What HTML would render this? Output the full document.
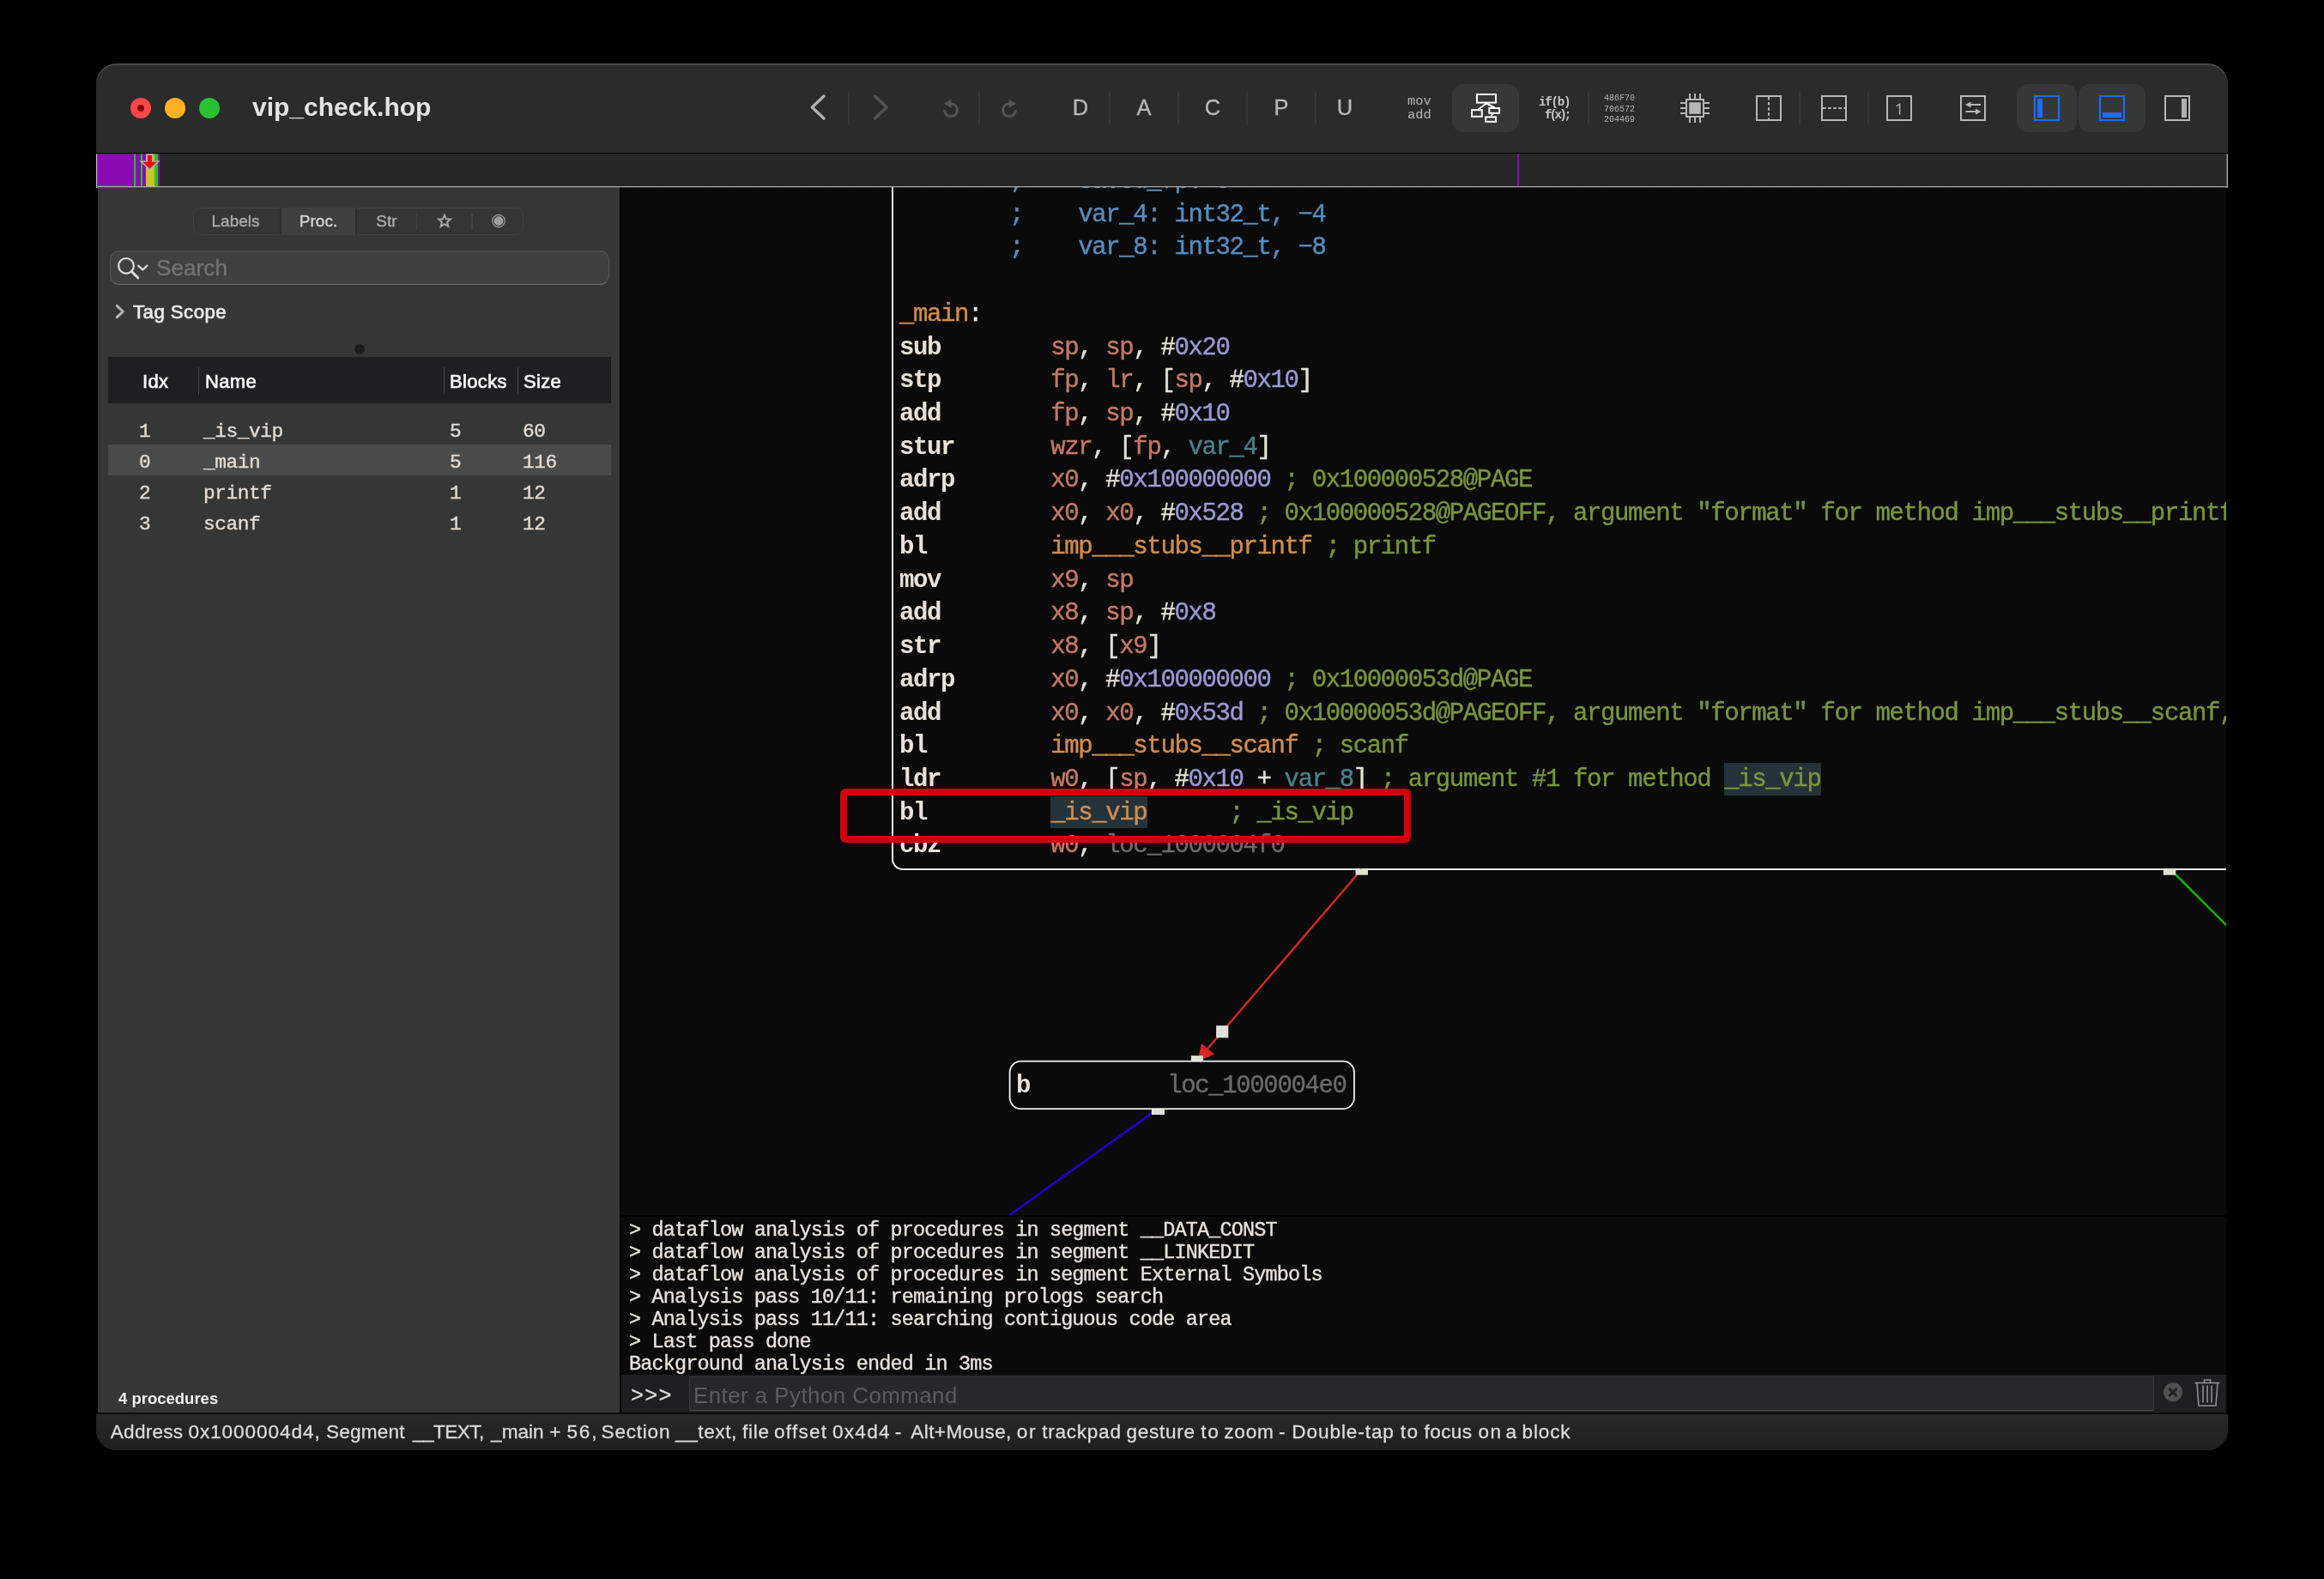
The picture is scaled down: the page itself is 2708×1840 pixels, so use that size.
<!DOCTYPE html>
<html>
<head>
<meta charset="utf-8">
<title>vip_check.hop</title>
<style>
*{box-sizing:border-box;margin:0;padding:0}
html,body{width:2708px;height:1840px;background:#000;overflow:hidden}
body{position:relative;font-family:"Liberation Sans",sans-serif;color:#ddd}
.abs{position:absolute}
.code,.con,.t{will-change:transform}
#win{position:absolute;left:112px;top:74px;width:2484px;height:1615.5px;border-radius:24px;overflow:hidden;background:#2a2c2b}
/* coordinates inside #win are page coords minus (112,74) -> use wrapper shifted */
#in{position:absolute;left:-112px;top:-74px;width:2708px;height:1840px}
#titlebar{left:112px;top:74px;width:2484px;height:104px;background:#2a2c2b}
#hilite{left:112px;top:74px;width:2484px;height:60px;border-radius:24px 24px 0 0;box-shadow:inset 0 1.5px 0 0 rgba(255,255,255,0.2);z-index:9}
#tline{left:112px;top:178px;width:2484px;height:2px;background:linear-gradient(#000 0,#000 50%,#151515 50%,#151515 100%)}
#nav{left:112px;top:179px;width:2484px;height:38px;background:#272626}
#navline{left:112px;top:217px;width:2484px;height:2px;background:linear-gradient(#a9a9a9 0,#a9a9a9 50%,rgba(170,170,170,.28) 50%,rgba(170,170,170,.28) 100%);z-index:5}
#sidebar{left:114px;top:218px;width:608px;height:1429px;background:#353736}
#divider{left:722px;top:218px;width:2px;height:1429px;background:#000}
#graph{left:724px;top:218px;width:1870px;height:1198px;background:#0a0a0a;overflow:hidden}
#console{left:724px;top:1416px;width:1870px;height:186px;background:#0a0a0a;border-top:2px solid #000}
#inputrow{left:724px;top:1602px;width:1870px;height:44px;background:#1e1f20}
#status{left:112px;top:1646px;width:2484px;height:44px;background:linear-gradient(#282828,#1f1f1f);border-top:2px solid #0c0c0c}
.sg{top:246px;text-align:center;font-size:19px;line-height:24px;color:#acaeae;-webkit-text-stroke:0.35px}
.th{top:430.5px;font-size:22px;line-height:28px;color:#f6f6f6;letter-spacing:0.35px;-webkit-text-stroke:0.7px}
.tc{top:486.3px;font-family:"Liberation Mono",monospace;font-size:22.8px;letter-spacing:-0.442px;line-height:35.9px;white-space:pre;color:#e4dcd3;-webkit-text-stroke:0.35px}
#stext{left:0;top:1653.9px;height:30px;width:2000px;font-size:22.6px;line-height:30px;color:#dcdcdc;white-space:pre;-webkit-text-stroke:0.3px}
#stext span{position:absolute;top:0}
.mono{font-family:"Liberation Mono",monospace}
.tb{top:110px;width:40px;text-align:center;font-size:25.5px;line-height:30px;color:#b6b8b8;-webkit-text-stroke:0.3px}
.code{font-family:"Liberation Mono",monospace;font-size:29px;letter-spacing:-1.383px;line-height:38.72px;white-space:pre;color:#e6e2da;-webkit-text-stroke:0.4px}
.m{-webkit-text-stroke:0}
.cl{position:absolute;left:0;height:38.72px}
.m{font-weight:bold;color:#e9e2da}
.r{color:#c57867}
.n{color:#9a9ad8}
.c{color:#78963e}
.v{color:#4b818a}
.o{color:#d18c4e}
.b{color:#578dbf}
.g{color:#6b6b6b}
.hl{background:#243239;padding:2.9px 0.8px 1.6px 0.6px;margin:0 -0.8px 0 -0.6px}
.con{font-family:"Liberation Mono",monospace;font-size:23.5px;letter-spacing:-0.862px;-webkit-text-stroke:0.35px;line-height:25.93px;white-space:pre;color:#e8e3dc}
</style>
</head>
<body>
<div id="win"><div id="in">
<div class="abs" id="titlebar"></div>
<div class="abs" id="hilite"></div>
<svg class="abs" style="left:112px;top:74px" width="2484" height="106" viewBox="112 74 2484 106">
<circle cx="164" cy="126" r="12" fill="#fe4848"/><circle cx="164" cy="126" r="4" fill="#820005"/>
<circle cx="204" cy="126" r="12" fill="#fdb024"/>
<circle cx="244" cy="126" r="12" fill="#27c133"/>
<polyline points="960,112 946.3,125 960,138" fill="none" stroke="#b2b4b4" stroke-width="3.3" stroke-linecap="round" stroke-linejoin="round"/>
<line x1="989" y1="106.5" x2="989" y2="145.5" stroke="#3a3c3b" stroke-width="1.6"/>
<polyline points="1019.5,112 1033.2,125 1019.5,138" fill="none" stroke="#525556" stroke-width="3.3" stroke-linecap="round" stroke-linejoin="round"/>
<g fill="none" stroke="#525556" stroke-width="2.9">
<path d="M1100.6,128.2 A7.4,7.4 0 1 0 1108,120.8"/>
<path d="M1183.4,128.2 A7.4,7.4 0 1 1 1176,120.8"/>
</g>
<polygon points="1100.2,120.8 1108.4,115.6 1108.4,126" fill="#525556"/>
<polygon points="1183.8,120.8 1175.6,115.6 1175.6,126" fill="#525556"/>
<line x1="1141" y1="106.5" x2="1141" y2="145.5" stroke="#3a3c3b" stroke-width="1.6"/><line x1="1293" y1="106.5" x2="1293" y2="145.5" stroke="#3a3c3b" stroke-width="1.6"/><line x1="1373" y1="106.5" x2="1373" y2="145.5" stroke="#3a3c3b" stroke-width="1.6"/><line x1="1453" y1="106.5" x2="1453" y2="145.5" stroke="#3a3c3b" stroke-width="1.6"/><line x1="1533" y1="106.5" x2="1533" y2="145.5" stroke="#3a3c3b" stroke-width="1.6"/><line x1="1851" y1="106.5" x2="1851" y2="145.5" stroke="#3a3c3b" stroke-width="1.6"/><line x1="2097" y1="106.5" x2="2097" y2="145.5" stroke="#3a3c3b" stroke-width="1.6"/><line x1="2177" y1="106.5" x2="2177" y2="145.5" stroke="#3a3c3b" stroke-width="1.6"/>
<rect x="1692" y="98" width="78" height="56" rx="13" fill="#363837"/>
<g fill="none" stroke="#ffffff" stroke-width="2">
<rect x="1721" y="110" width="22" height="9.6"/>
<rect x="1715" y="128.2" width="11.8" height="7.6"/>
<rect x="1735.3" y="126" width="11.8" height="5.8"/>
<rect x="1731.2" y="136.4" width="11.8" height="5.4"/>
<path d="M1732,120.5 L1722.5,127.5 M1732,120.5 L1741.5,125.5 M1739.5,132.5 L1737,136"/>
</g>
<g fill="none" stroke="#b5b8b8" stroke-width="2">
<rect x="1965" y="116" width="20" height="20"/>
<path d="M1969,109v6.5M1975,109v6.5M1981,109v6.5M1969,136.5v6.5M1975,136.5v6.5M1981,136.5v6.5M1958,120h6.5M1958,126h6.5M1958,132h6.5M1985.5,120h6.5M1985.5,126h6.5M1985.5,132h6.5"/>
<rect x="2047" y="112" width="28" height="28"/>
<path d="M2061,113v26" stroke-dasharray="3.5,2.6" stroke-dashoffset="0"/>
<rect x="2123" y="112" width="28" height="28"/>
<path d="M2124,126h26" stroke-dasharray="3.5,2.6"/>
<rect x="2199" y="112" width="28" height="28"/>
<rect x="2285" y="112" width="28" height="28"/>
<rect x="2523" y="112" width="28" height="28"/>
<path d="M2294,122h14M2290.5,130h14" stroke-width="2.2"/>
</g>
<rect x="1968.2" y="119.2" width="13.6" height="13.6" fill="#b5b8b8"/>
<polygon points="2290,122 2296.5,118.6 2296.5,125.4" fill="#b5b8b8"/>
<polygon points="2308.5,130 2302,126.6 2302,133.4" fill="#b5b8b8"/>
<rect x="2542" y="115" width="6" height="22" fill="#aeb1b1"/>
<path d="M2209.6,124 L2213.6,121.3 L2213.6,133.8" fill="none" stroke="#b5b8b8" stroke-width="1.4"/>
<rect x="2350" y="98" width="70" height="56" rx="13" fill="#363837"/>
<rect x="2422" y="98" width="78" height="56" rx="13" fill="#363837"/>
<g fill="none" stroke="#1a6dff" stroke-width="2">
<rect x="2371" y="112" width="28" height="28"/>
<rect x="2447" y="112" width="28" height="28"/>
</g>
<rect x="2374" y="115" width="6" height="22" fill="#1a6dff"/>
<rect x="2450" y="131" width="22" height="6" fill="#1a6dff"/>
</svg>
<div class="abs t" style="left:294px;top:107.4px;font-weight:bold;font-size:30px;line-height:36px;color:#e4e4e4;white-space:pre" id="title">vip_check.hop</div>
<div class="abs t tb" style="left:1239px">D</div>
<div class="abs t tb" style="left:1313px">A</div>
<div class="abs t tb" style="left:1393px">C</div>
<div class="abs t tb" style="left:1473px">P</div>
<div class="abs t tb" style="left:1547px">U</div>
<div class="abs t mono" style="left:1640px;top:111.2px;font-size:15.4px;line-height:15.6px;color:#b4b6b6;white-space:pre">mov
add</div>
<div class="abs t mono" style="left:1793px;top:111.5px;font-size:14.2px;font-weight:bold;letter-spacing:-1.25px;line-height:15.3px;color:#c6c8c8;white-space:pre">if(b)</div>
<div class="abs t mono" style="left:1799.5px;top:127px;font-size:14.2px;font-weight:bold;letter-spacing:-2.8px;line-height:15.3px;color:#c6c8c8;white-space:pre">f(x);</div>
<div class="abs t mono" style="left:1869px;top:108.8px;font-size:10px;line-height:12.5px;color:#b0b2b2;white-space:pre">486F70
706572
204469</div>
<div class="abs" id="tline"></div>
<div class="abs" id="nav"></div>
<svg class="abs" style="left:112px;top:178px" width="2484" height="42" viewBox="112 178 2484 42">
<rect x="113" y="179.4" width="43" height="37.8" fill="#8a0ab4"/>
<rect x="156" y="179.4" width="2" height="37.8" fill="#1ec81e"/>
<rect x="158" y="179.4" width="6" height="37.8" fill="#8a0ab4"/>
<rect x="164" y="179.4" width="2" height="37.8" fill="#1ec81e"/>
<rect x="166" y="179.4" width="4" height="37.8" fill="#8a0ab4"/>
<rect x="170" y="179.4" width="10" height="37.8" fill="#c8c628"/>
<rect x="180" y="179.4" width="4" height="37.8" fill="#22c424"/>
<rect x="184" y="179.4" width="2" height="37.8" fill="#8a0ab4"/>
<rect x="1768" y="179.4" width="2" height="37.8" fill="#8a0ab4"/>
<polygon points="171.3,180.2 177.7,180.2 177.7,188 184.6,188 174.5,197.6 164.4,188 171.3,188" fill="#ff0000" stroke="#a9abb0" stroke-width="1.7" stroke-linejoin="miter"/>
<rect x="112" y="179.4" width="1.2" height="39.6" fill="#bdbdbd"/>
<rect x="2594.6" y="179.4" width="1.4" height="39.6" fill="#a8a8a8"/>
</svg>
<div class="abs" id="navline"></div>
<div class="abs" id="sidebar"></div>
<div class="abs" id="seg" style="left:225px;top:242px;width:385px;height:32px;border-radius:9px;background:#343635;border:1.5px solid #3f4140"></div>
<div class="abs" style="left:326px;top:242px;width:90px;height:32px;background:#403f3f;border-left:2px solid #2c2d2c;border-right:2px solid #2c2d2c"></div>
<div class="abs" style="left:484.5px;top:249px;width:1.5px;height:19px;background:#414342"></div>
<div class="abs" style="left:549px;top:249px;width:1.5px;height:19px;background:#414342"></div>
<div class="abs t sg" style="left:223.5px;width:101px">Labels</div>
<div class="abs t sg" style="left:326px;width:90px;color:#d6d6d6">Proc.</div>
<div class="abs t sg" style="left:416px;width:69px">Str</div>
<svg class="abs" style="left:485px;top:242px" width="125" height="32" viewBox="485 242 125 32">
<polygon points="518.0,250.5 519.9,255.1 524.9,255.5 521.1,258.8 522.3,263.7 518.0,261.1 513.7,263.7 514.9,258.8 511.1,255.5 516.1,255.1" fill="none" stroke="#a9abab" stroke-width="1.9" stroke-linejoin="miter"/>
<circle cx="581" cy="257.5" r="7.2" fill="none" stroke="#a0a2a2" stroke-width="1.2"/>
<circle cx="581" cy="257.5" r="5.4" fill="#9d9f9f"/>
</svg>
<div class="abs" id="search" style="left:128px;top:292px;width:582px;height:40px;border-radius:11px;background:#3f4140;border:1.5px solid #555756;border-bottom-color:#6c6e6d"></div>
<svg class="abs" style="left:130px;top:294px" width="60" height="36" viewBox="130 294 60 36">
<circle cx="147" cy="309.8" r="8.8" fill="none" stroke="#dcdcdc" stroke-width="2.2"/>
<path d="M153.6,316.6 L160.8,323.8" stroke="#dcdcdc" stroke-width="3" stroke-linecap="round"/>
<polyline points="161.2,309.6 166.3,314.4 171.4,309.6" fill="none" stroke="#dcdcdc" stroke-width="2.2" stroke-linecap="round" stroke-linejoin="round"/>
</svg>
<div class="abs t" style="left:182px;top:297px;font-size:26.2px;line-height:30px;color:#727473;-webkit-text-stroke:0.35px">Search</div>
<svg class="abs" style="left:130px;top:350px" width="30" height="30" viewBox="130 350 30 30">
<polyline points="136.3,356.3 143.3,363 136.3,369.7" fill="none" stroke="#b4b6b6" stroke-width="3" stroke-linecap="round" stroke-linejoin="round"/>
</svg>
<div class="abs t" style="left:154.5px;top:350px;font-size:22.3px;line-height:28px;color:#ececec;letter-spacing:0.42px;-webkit-text-stroke:0.7px" id="tagscope">Tag Scope</div>
<div class="abs" style="left:413px;top:400.6px;width:12px;height:12px;border-radius:6px;background:#1c1c1c"></div>
<div class="abs" id="thead" style="left:126px;top:416px;width:586px;height:54px;background:#1e1f21"></div>
<div class="abs" style="left:230.5px;top:428px;width:1.5px;height:32px;background:#444645"></div>
<div class="abs" style="left:516.5px;top:428px;width:1.5px;height:32px;background:#444645"></div>
<div class="abs" style="left:602.5px;top:428px;width:1.5px;height:32px;background:#444645"></div>
<div class="abs t th" style="left:166px">Idx</div>
<div class="abs t th" style="left:238.5px">Name</div>
<div class="abs t th" style="left:524px">Blocks</div>
<div class="abs t th" style="left:610px">Size</div>
<div class="abs" id="selrow" style="left:126px;top:518px;width:586px;height:35.5px;background:#494b4a"></div>
<div class="abs t tc" style="left:161.5px">1
0
2
3</div>
<div class="abs t tc" style="left:237px">_is_vip
_main
printf
scanf</div>
<div class="abs t tc" style="left:523.5px">5
5
1
1</div>
<div class="abs t tc" style="left:609px">60
116
12
12</div>
<div class="abs t" style="left:138px;top:1618px;font-size:18.5px;font-weight:bold;line-height:24px;color:#f0f0f0">4 procedures</div>

<div class="abs" id="divider"></div>
<div class="abs" style="left:112px;top:219px;width:2px;height:1428px;background:#000"></div>
<div class="abs" style="left:2594px;top:219px;width:2px;height:1428px;background:#000"></div>
<div class="abs" id="graph"><div class="abs" id="gin" style="left:-724px;top:-218px;width:2708px;height:1840px">
<div class="abs" id="blk" style="left:1039px;top:100px;width:1700px;height:914px;border:2px solid #f2f2f2;border-radius:13px"></div>
<div class="abs code" id="code" style="left:1047.8px;top:193px">        <span class="b">;    saved_fp: 0</span>
        <span class="b">;    var_4: int32_t, −4</span>
        <span class="b">;    var_8: int32_t, −8</span>

<span class="o">_main</span>:
<span class="m">sub</span>        <span class="r">sp</span>, <span class="r">sp</span>, #<span class="n">0x20</span>
<span class="m">stp</span>        <span class="r">fp</span>, <span class="r">lr</span>, [<span class="r">sp</span>, #<span class="n">0x10</span>]
<span class="m">add</span>        <span class="r">fp</span>, <span class="r">sp</span>, #<span class="n">0x10</span>
<span class="m">stur</span>       <span class="r">wzr</span>, [<span class="r">fp</span>, <span class="v">var_4</span>]
<span class="m">adrp</span>       <span class="r">x0</span>, #<span class="n">0x100000000</span> <span class="c">; 0x100000528@PAGE</span>
<span class="m">add</span>        <span class="r">x0</span>, <span class="r">x0</span>, #<span class="n">0x528</span> <span class="c">; 0x100000528@PAGEOFF, argument "format" for method imp___stubs__printf</span>
<span class="m">bl</span>         <span class="o">imp___stubs__printf</span> <span class="c">; printf</span>
<span class="m">mov</span>        <span class="r">x9</span>, <span class="r">sp</span>
<span class="m">add</span>        <span class="r">x8</span>, <span class="r">sp</span>, #<span class="n">0x8</span>
<span class="m">str</span>        <span class="r">x8</span>, [<span class="r">x9</span>]
<span class="m">adrp</span>       <span class="r">x0</span>, #<span class="n">0x100000000</span> <span class="c">; 0x10000053d@PAGE</span>
<span class="m">add</span>        <span class="r">x0</span>, <span class="r">x0</span>, #<span class="n">0x53d</span> <span class="c">; 0x10000053d@PAGEOFF, argument "format" for method imp___stubs__scanf,</span>
<span class="m">bl</span>         <span class="o">imp___stubs__scanf</span> <span class="c">; scanf</span>
<span class="m">ldr</span>        <span class="r">w0</span>, [<span class="r">sp</span>, #<span class="n">0x10</span> + <span class="v">var_8</span>] <span class="c">; argument #1 for method <span class="hl">_is_vip</span></span>
<span class="m">bl</span>         <span class="o hl">_is_vip</span>      <span class="c">; _is_vip</span>
<span class="m">cbz</span>        <span class="r">w0</span>, <span class="g">loc_1000004f0</span></div>
<div class="abs" id="redbox" style="left:979px;top:919px;width:665px;height:63px;border:8px solid #d0000e;border-radius:6px"></div>
<svg class="abs" style="left:724px;top:219px" width="1870" height="1197" viewBox="724 219 1870 1197">
<polyline points="1586.7,1013 1424.2,1202.2 1400,1230.4" fill="none" stroke="#d72622" stroke-width="2.5"/>
<polygon points="1395.5,1237 1400.1,1216.1 1415,1228.5" fill="#d72622"/>
<rect x="1579.5" y="1013" width="14.5" height="6.6" fill="#e2ded8"/>
<rect x="1417.1" y="1195.1" width="14.2" height="14.2" fill="#e2ded8"/>
<rect x="1387.9" y="1230.1" width="14" height="6" fill="#e2ded8"/>
<line x1="1343" y1="1296.3" x2="1176.5" y2="1416" stroke="#1d00c4" stroke-width="2.7"/>
<rect x="1341.9" y="1293" width="15.1" height="6" fill="#e2ded8"/>
<line x1="2534" y1="1018" x2="2596" y2="1080" stroke="#16b000" stroke-width="2.6"/>
<rect x="2520.8" y="1013" width="14.5" height="6.7" fill="#e2ded8"/>
<rect x="1176.6" y="1236.7" width="401.4" height="55.4" rx="13" ry="13" fill="#0a0a0a" stroke="#f0f0f0" stroke-width="1.8"/>
</svg>
<div class="abs code" style="left:1183.5px;top:1246.7px"><span class="m">b</span>          <span class="g">loc_1000004e0</span></div>
</div></div>
<div class="abs" id="console"></div>
<div class="abs con" id="context" style="left:732.8px;top:1420.9px">&gt; dataflow analysis of procedures in segment __DATA_CONST
&gt; dataflow analysis of procedures in segment __LINKEDIT
&gt; dataflow analysis of procedures in segment External Symbols
&gt; Analysis pass 10/11: remaining prologs search
&gt; Analysis pass 11/11: searching contiguous code area
&gt; Last pass done
Background analysis ended in 3ms</div>
<div class="abs" id="inputrow"></div>
<div class="abs" style="left:803px;top:1604px;width:1707px;height:40px;background:#27282a;border:1.5px solid #38393a;border-bottom-color:#4a4b4c"></div>
<div class="abs con" style="left:734.5px;top:1612.5px;font-size:25px;letter-spacing:1.3px;line-height:30px;color:#dcdcdc">&gt;&gt;&gt;</div>
<div class="abs t" style="left:808px;top:1611.2px;font-size:25.8px;letter-spacing:0.5px;line-height:30px;color:#5b5d5d" id="pycmd">Enter a Python Command</div>
<svg class="abs" style="left:2515px;top:1602px" width="80" height="44" viewBox="2515 1602 80 44">
<circle cx="2532" cy="1622.3" r="11" fill="#4f5151"/>
<path d="M2527.6,1618 L2536.4,1626.8 M2536.4,1618 L2527.6,1626.8" stroke="#1e1f20" stroke-width="2.8" stroke-linecap="butt"/>
<g fill="none" stroke="#8e9090" stroke-width="1.6">
<path d="M2557.5,1611.5 h29"/>
<path d="M2568.5,1611 v-3 h7 v3"/>
<path d="M2560,1612 l2,26 h20 l2,-26"/>
<path d="M2567,1614.5 v20 M2572,1614.5 v20 M2577,1614.5 v20"/>
</g>
</svg>
<div class="abs" id="status"></div>
<div class="abs t" id="stext"><span style="left:128.8px;letter-spacing:0.23px">Address</span><span style="left:219.4px;letter-spacing:0.92px">0x1000004d4,</span><span style="left:380.0px;letter-spacing:0.20px">Segment</span><span style="left:480.9px;letter-spacing:-0.55px">__TEXT,</span><span style="left:572.1px;letter-spacing:-0.03px">_main</span><span style="left:640.3px;letter-spacing:0.00px">+</span><span style="left:660.4px;letter-spacing:1.90px">56,</span><span style="left:700.6px;letter-spacing:0.75px">Section</span><span style="left:787.0px;letter-spacing:0.58px">__text,</span><span style="left:865.1px;letter-spacing:0.73px">file</span><span style="left:902.0px;letter-spacing:1.24px">offset</span><span style="left:969.9px;letter-spacing:1.28px">0x4d4</span><span style="left:1042.7px;letter-spacing:0.00px">-</span><span style="left:1061.3px;letter-spacing:0.38px">Alt+Mouse,</span><span style="left:1184.7px;letter-spacing:1.70px">or</span><span style="left:1214.2px;letter-spacing:0.73px">trackpad</span><span style="left:1312.6px;letter-spacing:0.67px">gesture</span><span style="left:1399.3px;letter-spacing:1.70px">to</span><span style="left:1426.2px;letter-spacing:0.83px">zoom</span><span style="left:1490.0px;letter-spacing:0.00px">-</span><span style="left:1505.3px;letter-spacing:0.90px">Double-tap</span><span style="left:1631.7px;letter-spacing:1.60px">to</span><span style="left:1659.6px;letter-spacing:0.38px">focus</span><span style="left:1722.4px;letter-spacing:1.50px">on</span><span style="left:1754.6px;letter-spacing:0.00px">a</span><span style="left:1773.5px;letter-spacing:0.85px">block</span></div>
</div></div>
</body>
</html>
